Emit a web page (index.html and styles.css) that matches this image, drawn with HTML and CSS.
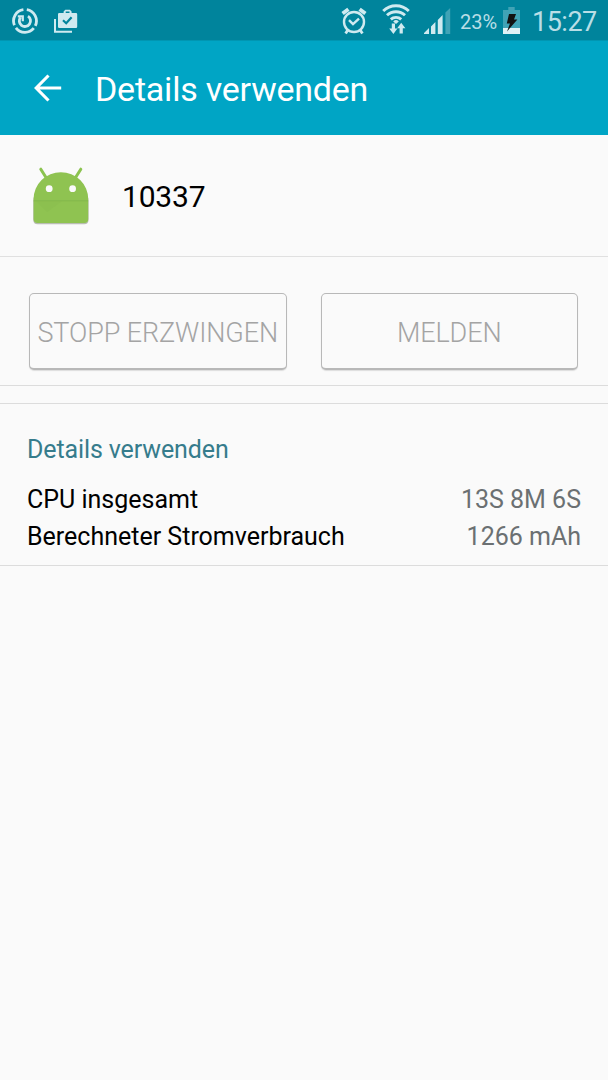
FILE: index.html
```html
<!DOCTYPE html>
<html lang="de">
<head>
	<meta charset="UTF-8">
	<title>Details verwenden</title>
	<link rel="stylesheet" href="styles.css">
</head>
<body>
	<!-- status bar -->
	<div class="status">
		<svg class="ic-ring" width="28" height="28" viewBox="0 0 28 28">
			<g fill="none" stroke="#cfeaf0" stroke-width="2.8">
				<path d="M12.4 2.6A11.4 11.4 0 0 0 3.4 18.2"/>
				<path d="M4.9 20.8A11.4 11.4 0 0 0 22.8 21.2"/>
				<path d="M24.3 18.9A11.4 11.4 0 0 0 15.8 2.7"/>
				<path d="M17 9.2A5.6 5.6 0 1 1 9.6 10.3"/>
				<path d="M6.8 9.3H11.8V14.2" stroke-width="2.2"/>
			</g>
		</svg>
		<svg class="ic-bag" width="26" height="26" viewBox="0 0 26 26">
			<path fill="#cfeaf0" fill-rule="evenodd" d="M6.2 4H10.6V2.6L12.3 .8H16.9L18.6 2.6V4H23A1.2 1.2 0 0 1 24.2 5.2V17.8A1.2 1.2 0 0 1 23 19H6.2A1.2 1.2 0 0 1 5 17.8V5.2A1.2 1.2 0 0 1 6.2 4ZM12.7 4H16.5V2.6H12.7Z"/>
			<path fill="none" stroke="#cfeaf0" stroke-width="2" d="M2 10V22.7H19"/>
			<path fill="none" stroke="#00849c" stroke-width="2.2" d="M10 11.2L13.2 14.2L18.6 8.2"/>
		</svg>
		<svg class="ic-alarm" width="26" height="28" viewBox="0 0 26 28">
			<g fill="none" stroke="#cfeaf0">
				<circle cx="13" cy="15" r="10" stroke-width="2.4"/>
				<path stroke-width="2.4" d="M8 13.2L12 17.2L18 11.6"/>
				<path stroke-width="3.8" d="M1.6 6.6L7.4 2.2M24.4 6.6L18.6 2.2"/>
				<path stroke-width="2.8" d="M6.8 23L4.6 26.6M19.2 23L21.4 26.6"/>
			</g>
		</svg>
		<svg class="ic-wifi" width="30" height="32" viewBox="0 0 30 32">
			<g fill="none" stroke="#cfeaf0" stroke-width="2.9">
				<path d="M2.2 8A18.3 18.3 0 0 1 27.8 8"/>
				<path d="M6 12.3A13 13 0 0 1 24 12.3"/>
				<path d="M9.8 16.4A7.6 7.6 0 0 1 20.2 16.4"/>
			</g>
			<path fill="#cfeaf0" d="M15 21L12.2 18.4A4 4 0 0 1 17.8 18.4Z"/>
			<path fill="#cfeaf0" d="M10.8 20.5H14V25.6H16.4L12.4 31L8.2 25.6H10.8ZM18.6 30.5H21.8V25.2H24.4L20.2 19.8L16.2 25.2H18.6Z"/>
		</svg>
		<svg class="ic-signal" width="27" height="27" viewBox="0 0 27 27">
			<path fill="#cfeaf0" d="M0 26V25L5 20V26ZM7 26V18.4L11.4 14V26ZM13.8 26V12L18.6 7V26Z"/>
			<path fill="#40a3b6" d="M21.4 26V4.5L26.2 0V26Z"/>
		</svg>
		<span class="percent">23%</span>
		<svg class="ic-battery" width="17" height="27" viewBox="0 0 17 27">
			<path fill="#40a3b6" d="M5.3 0H11.7V3H17V22H0V3H5.3Z"/>
			<path fill="#dff2f6" d="M0 21H17V27H0Z"/>
			<path fill="#111" d="M6 7H13L11 12.6H14.4L4 24.5L7 16.4H3.8Z"/>
		</svg>
		<span class="clock">15:27</span>
	</div>

	<!-- title bar -->
	<div class="header">
		<svg class="back" width="28" height="28" viewBox="0 0 28 28">
			<path fill="none" stroke="#fff" stroke-width="3.1" d="M14.5 1.5L2.2 14L14.5 26.5M2.2 14H27.2"/>
		</svg>
		<h1>Details verwenden</h1>
	</div>

	<div class="app">
		<svg class="robot" width="58" height="60" viewBox="0 0 58 60">
			<path fill="#b9bdb3" d="M1.2 35.5A27.6 20 0 0 1 56.6 35.5V54A4.4 4.4 0 0 1 52.2 58.2H5.6A4.4 4.4 0 0 1 1.2 54Z"/>
			<path stroke="#8bc34f" stroke-width="3" stroke-linecap="round" d="M8.8 3.2L15 13M48.8 3.2L42.6 13"/>
			<path fill="#8fc351" d="M1.6 33A27.3 26.8 0 0 1 56.2 33V53A4 4 0 0 1 52.2 57H5.6A4 4 0 0 1 1.6 53Z"/>
			<path fill="#7fb34a" d="M1.6 34.5H56.2V35.3H1.6Z"/>
			<path fill="#86ba4c" d="M4 35.3H30L15 46Z" opacity=".35"/>
			<circle cx="17.2" cy="22.7" r="3.4" fill="#fafafa"/>
			<circle cx="40.6" cy="22.7" r="3.4" fill="#fafafa"/>
		</svg>
		<span class="name">10337</span>
	</div>

	<div class="buttons">
		<button class="btn" disabled>STOPP ERZWINGEN</button>
		<button class="btn" disabled>MELDEN</button>
	</div>

	<div class="details">
		<h2>Details verwenden</h2>
		<div class="row">
			<span class="cpu">CPU insgesamt</span>
			<span class="value">13S 8M 6S</span>
		</div>
		<div class="row">
			<span class="power">Berechneter Stromverbrauch</span>
			<span class="value">1266 mAh</span>
		</div>
	</div>
</body>
</html>
```

FILE: styles.css
```css
*{
	margin:0;
	padding:0;
	box-sizing: border-box;
}
body{
	width: 608px;
	height: 1080px;
	background: #fafafa;
	font-family: Roboto, "Noto Sans", sans-serif;
	color: #000;
	overflow: hidden;
}
svg{
	display: block;
	flex: none;
}
span, h1, h2{
	white-space: nowrap;
}

/* status bar */
.status{
	display: flex;
	align-items: flex-start;
	height: 41px;
	padding: 0 12px 0 11px;
	background: #00849c;
	border-bottom: 1px solid #0096b2;
	color: #cfeaf0;
}
.ic-ring{
	margin-top: 7px;
}
.ic-bag{
	margin: 9px 0 0 14px;
}
.ic-alarm{
	margin: 7px 0 0 auto;
}
.ic-wifi{
	margin: 3px 0 0 14px;
}
.ic-signal{
	margin: 8px 0 0 13px;
}
.percent{
	margin-left: 9px;
	width: 43px;
	font-size: 20px;
	line-height: 44px;
	color: #b9dee6;
}
.ic-battery{
	margin-top: 7px;
}
.clock{
	width: 64px;
	margin-left: 12px;
	font-size: 27px;
	line-height: 45px;
	letter-spacing: -.5px;
	color: #b9dee6;
}

/* title bar */
.header{
	display: flex;
	align-items: center;
	height: 94px;
	padding-left: 34px;
	background: #00a5c5;
	color: #fff;
}
.header h1{
	margin-left: 33px;
	padding-top: 2px;
	font-size: 34px;
	font-weight: 400;
	line-height: 40px;
	letter-spacing: -.22px;
}

.app{
	display: flex;
	align-items: center;
	height: 122px;
	padding-left: 32px;
	border-bottom: 1px solid #e0e0e0;
}
.name{
	margin-left: 32px;
	padding-top: 2px;
	font-size: 30px;
	letter-spacing: -.2px;
}

.buttons{
	display: flex;
	gap: 34px;
	height: 129px;
	padding: 36px 30px 0 29px;
	border-bottom: 1px solid #dcdcdc;
}
.btn{
	flex: 1;
	height: 77px;
	padding-top: 4px;
	background: #fafafa;
	border: 1px solid #b8b8b8;
	border-bottom-width: 2px;
	border-radius: 5px;
	box-shadow: 0 1px 1px #ddd;
	font-family: inherit;
	font-size: 27px;
	font-weight: 300;
	letter-spacing: -.1px;
	color: #a4a4a4;
	white-space: nowrap;
}

.details{
	height: 163px;
	margin-top: 17px;
	padding: 28px 27px 0;
	border-top: 1px solid #dcdcdc;
	border-bottom: 1px solid #dcdcdc;
}
.details h2{
	height: 49px;
	font-size: 25px;
	font-weight: 400;
	line-height: 36px;
	letter-spacing: -.12px;
	color: #367c8c;
}
.row{
	display: flex;
	justify-content: space-between;
	height: 37px;
	font-size: 25px;
	line-height: 37px;
}
.value{
	color: #6b7072;
}
```
